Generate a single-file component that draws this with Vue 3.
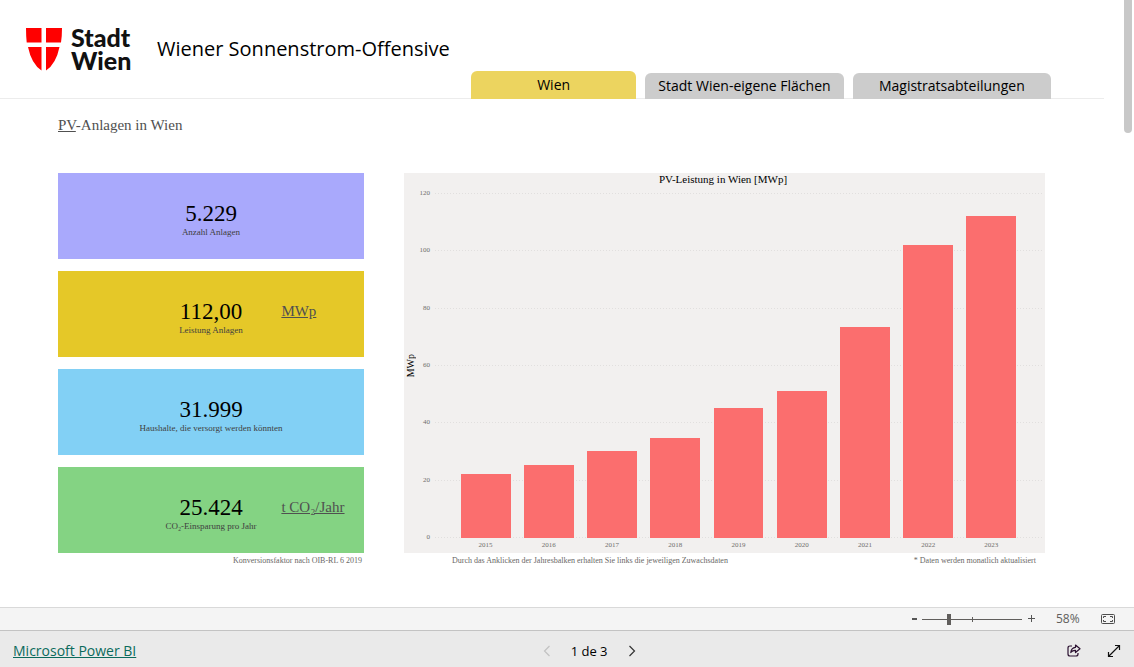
<script setup>
import { ref } from 'vue'

const tabs = ['Wien', 'Stadt Wien-eigene Flächen', 'Magistratsabteilungen']
const activeTab = ref(0)
const zoom = ref(26)

const cards = [
  { tone: 'violet', value: '5.229', label: 'Anzahl Anlagen' },
  { tone: 'yellow', value: '112,00', label: 'Leistung Anlagen', unit: 'MWp' },
  { tone: 'blue', value: '31.999', label: 'Haushalte, die versorgt werden könnten' },
  { tone: 'green', value: '25.424', label: 'CO₂-Einsparung pro Jahr', unit: 't CO₂/Jahr' },
]

const maxValue = 120
const ticks = [120, 100, 80, 60, 40, 20, 0]
const bars = [
  { year: 2015, value: 22.4 },
  { year: 2016, value: 25.4 },
  { year: 2017, value: 30.1 },
  { year: 2018, value: 34.8 },
  { year: 2019, value: 45.1 },
  { year: 2020, value: 51.3 },
  { year: 2021, value: 73.4 },
  { year: 2022, value: 101.9 },
  { year: 2023, value: 112 },
]
</script>

<template>
  <div class="page">
    <header class="header">
      <div class="brand">
        <div class="logo">
          <svg class="shield" viewBox="0 0 36 43" aria-hidden="true">
            <path fill="#ff0000" d="M0 0H15.500V14.500H.7Q0 8 0 0ZM20 0H36Q36 8 35 14.500H20ZM2 19H15.500V42.500Q5.500 36 2 19ZM20 19H33.500Q30 36 20 42.500Z" />
          </svg>
          <span class="logo-text">Stadt<br />Wien</span>
        </div>
        <h1 class="title">Wiener Sonnenstrom-Offensive</h1>
      </div>
      <nav class="tabs">
        <button
          v-for="(tab, i) in tabs"
          :key="tab"
          type="button"
          class="tab"
          :class="{ active: i === activeTab }"
          @click="activeTab = i"
        >{{ tab }}</button>
      </nav>
    </header>

    <main class="main">
      <h2 class="subtitle"><a href="#pv">PV</a>-Anlagen in Wien</h2>
      <div class="content">
        <section class="cards">
          <article v-for="card in cards" :key="card.label" class="card" :class="card.tone">
            <div class="stat">
              <div class="value">{{ card.value }}</div>
              <div class="label">{{ card.label }}</div>
            </div>
            <a v-if="card.unit" class="unit" href="#einheit">{{ card.unit }}</a>
          </article>
        </section>

        <section class="chart">
          <h3 class="chart-title">PV-Leistung in Wien [MWp]</h3>
          <div class="axis-name"><span>MWp</span></div>
          <div class="y-ticks">
            <span v-for="t in ticks" :key="t">{{ t }}</span>
          </div>
          <div class="plot">
            <div class="grid-lines">
              <i v-for="t in ticks" :key="t"></i>
            </div>
            <div class="bars">
              <div v-for="bar in bars" :key="bar.year" class="slot">
                <button
                  type="button"
                  class="bar"
                  :aria-label="`${bar.year}: ${bar.value} MWp`"
                  :style="{ height: (bar.value / maxValue) * 100 + '%' }"
                ></button>
              </div>
            </div>
          </div>
          <div class="x-ticks">
            <span v-for="bar in bars" :key="bar.year">{{ bar.year }}</span>
          </div>
        </section>

        <p class="note factor">Konversionsfaktor nach OIB-RL 6 2019</p>
        <div class="note hints">
          <span>Durch das Anklicken der Jahresbalken erhalten Sie links die jeweiligen Zuwachsdaten</span>
          <span>* Daten werden monatlich aktualisiert</span>
        </div>
      </div>
      <div class="scroll-thumb" aria-hidden="true"></div>
    </main>

    <div class="zoom-bar">
      <button type="button" class="icon-btn" aria-label="Verkleinern">
        <svg width="7" height="12" viewBox="0 0 7 12"><path d="M1 6H6" stroke="#555" stroke-width="2" /></svg>
      </button>
      <input v-model="zoom" class="range" type="range" min="0" max="100" aria-label="Zoom" />
      <button type="button" class="icon-btn" aria-label="Vergrößern">
        <svg width="9" height="12" viewBox="0 0 9 12"><path d="M1 5.500H8M4.500 2V9" stroke="#555" stroke-width="1" fill="none" /></svg>
      </button>
      <span class="percent">58%</span>
      <button type="button" class="icon-btn" aria-label="An Seite anpassen">
        <svg width="14" height="12" viewBox="0 0 14 12" fill="none" stroke="#4d4d4d">
          <rect x=".5" y="1.500" width="13" height="9" rx="1" />
          <path d="M5 3.500H2.500V5M9 3.500H11.500V5M5 8.500H2.500V7M9 8.500H11.500V7" />
        </svg>
      </button>
    </div>

    <footer class="footer">
      <a class="product" href="#powerbi">Microsoft Power BI</a>
      <div class="pager">
        <button type="button" class="icon-btn" aria-label="Vorherige Seite" disabled>
          <svg width="8" height="12" viewBox="0 0 8 12" fill="none" stroke="#c2c2c2" stroke-width="1.200"><path d="M6.500 1L1.500 6L6.500 11" /></svg>
        </button>
        <span class="pages">1 de 3</span>
        <button type="button" class="icon-btn" aria-label="Nächste Seite">
          <svg width="8" height="12" viewBox="0 0 8 12" fill="none" stroke="#333" stroke-width="1.200"><path d="M1.500 1L6.500 6L1.500 11" /></svg>
        </button>
      </div>
      <div class="actions">
        <button type="button" class="icon-btn" aria-label="Teilen">
          <svg width="14" height="14" viewBox="0 0 14 14" fill="none" stroke="#2a1030" stroke-width="1.200" stroke-linejoin="round">
            <path d="M5 2H3Q1 2 1 4V10Q1 12 3 12H9Q11 12 11 10V9" />
            <path d="M8.500 1L13 4.800L8.500 8.500V6.300Q5.500 6.200 3.800 8.500Q4.200 3.700 8.500 3.300Z" />
          </svg>
        </button>
        <button type="button" class="icon-btn" aria-label="Vollbild">
          <svg width="14" height="14" viewBox="0 0 14 14" fill="none" stroke="#111" stroke-width="1.200">
            <path d="M1.500 12.500L12.500 1.500M8 1.500H12.500V6M1.500 8V12.500H6" />
          </svg>
        </button>
      </div>
    </footer>
  </div>
</template>

<style>
body {
  margin: 0;
}
</style>

<style scoped>
.page {
  position: relative;
  display: flex;
  flex-direction: column;
  min-height: 100vh;
  background: #fff;
  color: #000;
  font-family: 'Liberation Serif', 'Times New Roman', serif;
}
.page * {
  box-sizing: border-box;
}
h1,
h2,
h3,
p {
  margin: 0;
  font-weight: 400;
}
button {
  padding: 0;
  border: 0;
  background: none;
  color: inherit;
  font: inherit;
}

.header {
  display: flex;
  align-items: flex-end;
  min-height: 99px;
  margin-right: 30px;
  padding-right: 53px;
  border-bottom: 1px solid #ececec;
}
.brand {
  display: flex;
  align-items: center;
  flex: 0 0 471px;
  align-self: stretch;
  padding-left: 26px;
  font-family: 'Open Sans', sans-serif;
}
.logo {
  display: flex;
  align-items: center;
  gap: 9px;
  width: 131px;
}
.shield {
  width: 36px;
  height: 43px;
}
.logo-text {
  color: #111;
  font: 900 25px/23px Lato, sans-serif;
}
.title {
  font-size: 20px;
  line-height: 28px;
  white-space: nowrap;
}
.tabs {
  display: flex;
  align-items: flex-end;
  flex: 1;
  gap: 9px;
  margin-bottom: -1px;
}
.tab {
  flex: 198 1 0;
  height: 26px;
  border-radius: 6px 6px 0 0;
  background: #ccc;
  font: 14px/26px 'Open Sans', sans-serif;
  white-space: nowrap;
}
.tab.active {
  flex-grow: 165;
  height: 28px;
  background: #ecd45f;
}

.main {
  flex: 1;
  padding: 16px 89px 40px 58px;
}
.subtitle {
  color: #505050;
  font-size: 15px;
  line-height: 20px;
}
.subtitle a,
.unit {
  color: #505050;
  text-decoration: underline;
}
.content {
  display: grid;
  grid-template-columns: 306fr 641fr;
  column-gap: 40px;
  margin-top: 38px;
}
.cards {
  display: grid;
  gap: 12px;
}
.card {
  display: grid;
  grid-template-columns: 73% 1fr;
  align-items: center;
  min-height: 86px;
  padding-top: 8px;
}
.violet {
  background: #a9a9fc;
}
.yellow {
  background: #e5c828;
}
.blue {
  background: #82d0f5;
}
.green {
  background: #84d383;
}
.stat {
  grid-area: 1 / 1 / 2 / 3;
  text-align: center;
}
.value {
  font-size: 23px;
  line-height: 24px;
}
.label {
  color: #404040;
  font-size: 9px;
  line-height: 12px;
}
.unit {
  grid-area: 1 / 2;
  padding-bottom: 14px;
  font-size: 15px;
  line-height: 20px;
}

.chart {
  display: grid;
  grid-template: 20px 1fr 15px / 14px 12px 1fr;
  column-gap: 0;
  padding-right: 3px;
  background: #f2f0ef;
}
.chart-title {
  grid-column: 1 / -1;
  font-size: 11px;
  line-height: 12px;
  text-align: center;
}
.axis-name {
  display: flex;
  align-items: center;
  justify-content: center;
  font-size: 10px;
  line-height: 12px;
}
.axis-name span {
  writing-mode: vertical-rl;
  transform: rotate(180deg);
}
.y-ticks {
  display: flex;
  flex-direction: column;
  justify-content: space-between;
  margin: -4px 0;
  color: #706e6c;
  font-size: 7px;
  line-height: 9px;
  text-align: right;
}
.plot {
  position: relative;
  margin-left: 5px;
}
.grid-lines {
  position: absolute;
  inset: 0;
  display: flex;
  flex-direction: column;
  justify-content: space-between;
}
.grid-lines i {
  height: 1px;
  background: repeating-linear-gradient(90deg, #e1dfde 0 1px, transparent 1px 3px);
}
.bars {
  position: absolute;
  inset: 0 19px;
  display: flex;
}
.slot {
  display: flex;
  align-items: flex-end;
  justify-content: center;
  flex: 1;
}
.bar {
  width: 79%;
  background: #fb6e6e;
}
.x-ticks {
  grid-column: 3;
  display: flex;
  align-items: center;
  padding: 0 19px 0 24px;
  color: #706e6c;
  font-size: 7px;
  line-height: 9px;
}
.x-ticks span {
  flex: 1;
  text-align: center;
}
.note {
  padding-top: 3px;
  color: #6a6866;
  font-size: 8px;
  line-height: 10px;
}
.factor {
  padding-right: 2px;
  text-align: right;
}
.hints {
  display: flex;
  justify-content: space-between;
  padding: 3px 9px 0 48px;
}
.scroll-thumb {
  position: absolute;
  top: 0;
  right: 2px;
  width: 8px;
  height: 133px;
  border-radius: 0 0 4px 4px;
  background: #c8c8c8;
}

.zoom-bar {
  display: flex;
  align-items: center;
  justify-content: flex-end;
  height: 23px;
  padding-right: 19px;
  border-top: 1px solid #d9d9d9;
  background: #f4f4f4;
  font-family: 'Open Sans', sans-serif;
}
.icon-btn {
  display: flex;
}
.range {
  width: 100px;
  height: 12px;
  margin: 0 5px 0 4px;
  appearance: none;
  background:
    linear-gradient(#605e5c, #605e5c) 50px 4px / 1px 5px no-repeat,
    linear-gradient(#605e5c, #605e5c) 0 6px / 100% 1px no-repeat;
}
.range::-webkit-slider-thumb {
  width: 4px;
  height: 11px;
  appearance: none;
  background: #605e5c;
}
.percent {
  width: 23px;
  margin: 0 22px 0 20px;
  color: #605e5c;
  font-size: 12px;
  line-height: 16px;
}

.footer {
  display: grid;
  grid-template-columns: 12fr auto 11fr;
  align-items: center;
  height: 37px;
  padding: 3px 13px 0;
  border-top: 1px solid #c3c3c3;
  background: #eaeaea;
  font-family: 'Open Sans', sans-serif;
}
.product {
  justify-self: start;
  color: #0b6a5c;
  font-size: 14px;
  line-height: 20px;
}
.pager {
  display: flex;
  align-items: center;
  gap: 20px;
}
.pages {
  font-size: 13px;
  font-weight: 500;
  line-height: 20px;
}
.actions {
  display: flex;
  justify-content: flex-end;
  gap: 26px;
}
</style>
